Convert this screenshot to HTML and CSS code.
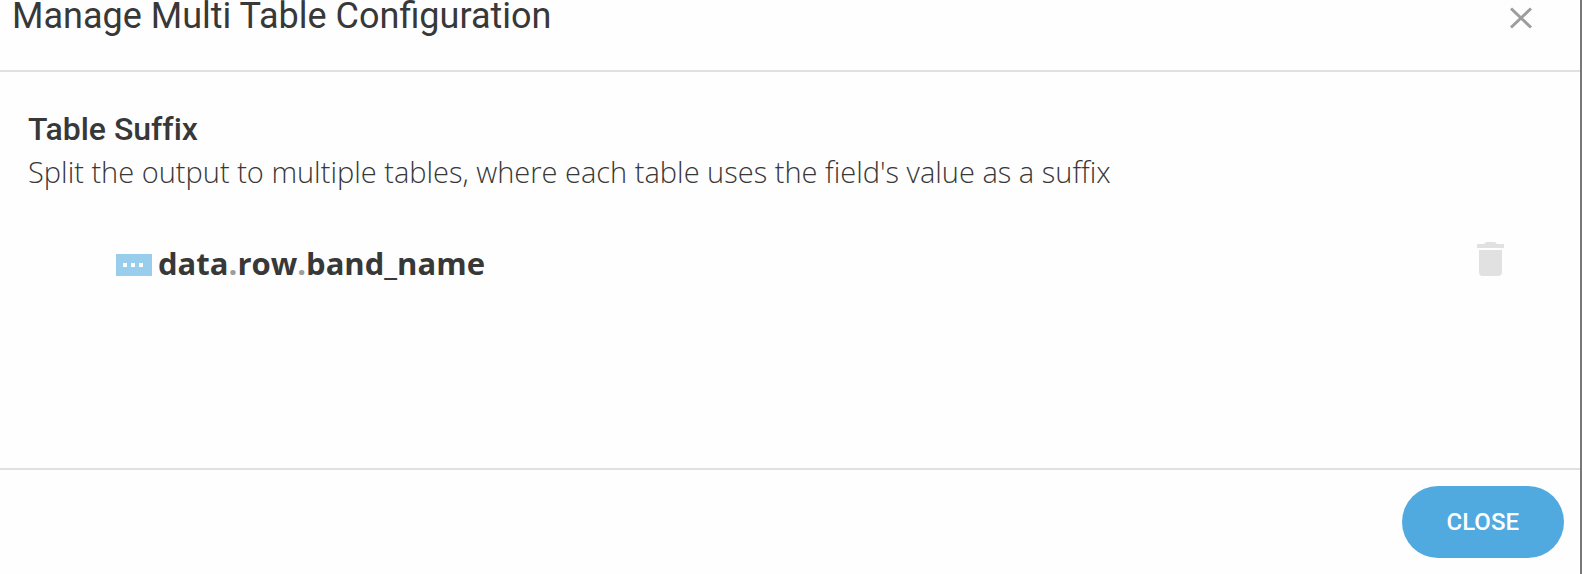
FILE: index.html
```html
<!DOCTYPE html>
<html lang="en">
<head>
    <meta charset="UTF-8">
    <meta name="viewport" content="width=device-width, initial-scale=1.0">
    <title>Manage Multi Table Configuration</title>
    <link rel="stylesheet" href="styles.css">
</head>
<body>
    <div class="dialog" role="dialog" aria-labelledby="dialogTitle">
        <header class="dialog-header">
            <h1 id="dialogTitle">Manage Multi Table Configuration</h1>
            <button type="button" class="icon-button" aria-label="Close dialog">
                <svg width="24" height="24" viewBox="0 0 24 24" fill="none" stroke="#9d9d9d" stroke-width="3">
                    <path d="M2 2.5L22 21.5M22 2.5L2 21.5"/>
                </svg>
            </button>
        </header>
        <main class="dialog-body">
            <h2>Table Suffix</h2>
            <p class="description">Split the output to multiple tables, where each table uses the field's value as a suffix</p>
            <div class="field-row">
                <svg class="type-icon" width="36" height="22" viewBox="0 0 36 22">
                    <path fill="#99cdec" d="M0 0h36v22H0z"/>
                    <path fill="#fff" d="M7 9h4v4H7zM15 9h4v4h-4zM23 9h4v4h-4z"/>
                </svg>
                <span class="field-name">data<span class="dot">.</span>row<span class="dot">.</span>band_name</span>
                <button type="button" class="icon-button delete" aria-label="Delete field">
                    <svg width="27" height="34" viewBox="0 0 27 34" fill="#e1e1e1">
                        <path d="M0 2h7l2-2h9l2 2h7v4H0zM2 8h23v22a4 4 0 0 1-4 4H6a4 4 0 0 1-4-4z"/>
                    </svg>
                </button>
            </div>
        </main>
        <footer class="dialog-footer">
            <button type="button" class="close-button">CLOSE</button>
        </footer>
    </div>
</body>
</html>
```
FILE: styles.css
```css
* {
    box-sizing: border-box;
}
body {
    margin: 0;
    background: #fefefe;
    color: #383838;
    font-family: Roboto, sans-serif;
}
.dialog {
    display: flex;
    flex-direction: column;
    min-height: 100vh;
    border-right: 2px solid #777;
}
.dialog-header {
    display: flex;
    justify-content: space-between;
    align-items: flex-start;
    padding: 0 47px 38px 12px;
    border-bottom: 2px solid #e0e0e0;
}
h1 {
    margin: 0;
    font-size: 36px;
    font-weight: 400;
    line-height: 32px;
}
.icon-button {
    display: flex;
    padding: 0;
    border: none;
    background: none;
    cursor: pointer;
}
.dialog-header .icon-button {
    margin-top: 6px;
}
.dialog-body {
    flex: 1;
    padding: 37px 76px 0 28px;
}
h2 {
    margin: 0;
    font-size: 32px;
    font-weight: 500;
    line-height: 40px;
    font-variant-ligatures: none;
}
.description {
    margin: 0;
    font-family: "Open Sans", sans-serif;
    font-size: 29px;
    font-weight: 300;
    line-height: 46px;
    font-variant-ligatures: none;
}
.field-row {
    display: flex;
    align-items: center;
    gap: 6px;
    margin-top: 47px;
    padding-left: 88px;
}
.type-icon {
    margin-top: 4px;
}
.field-name {
    font-family: "Open Sans", sans-serif;
    font-size: 31px;
    font-weight: 700;
    line-height: 40px;
}
.dot {
    color: #9d9d9d;
}
.delete {
    margin: 0 0 8px auto;
}
.dialog-footer {
    display: flex;
    justify-content: flex-end;
    padding: 16px;
    border-top: 2px solid #e0e0e0;
}
.close-button {
    padding: 0 45px;
    border: none;
    border-radius: 36px;
    background: #50aadf;
    color: #fff;
    font-family: Roboto, sans-serif;
    font-size: 24px;
    font-weight: 500;
    line-height: 72px;
    cursor: pointer;
}
```
